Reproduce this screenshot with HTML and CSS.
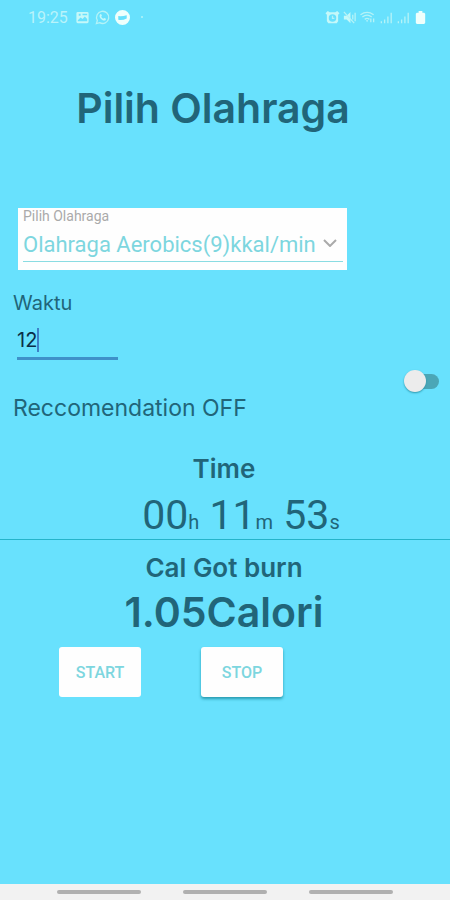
FILE: index.html
```html
<!DOCTYPE html>
<html lang="id">
<head>
<meta charset="utf-8">
<meta name="viewport" content="width=device-width, initial-scale=1">
<title>Pilih Olahraga</title>
<link rel="stylesheet" href="styles.css">
</head>
<body>
<header class="status">
  <div class="status-group">
    <span class="clock">19:25</span>
    <svg class="icon" viewBox="0 0 16 16"><path fill-rule="evenodd" d="M3 2h10q1.500 0 1.500 1.500v9q0 1.500-1.500 1.500H3q-1.500 0-1.500-1.500v-9Q1.500 2 3 2zM3 12h10V9.500L10.500 7 8 9.500 6 8l-3 3zM4 4v2h2V4zM8 4v1.500h5V4z"/></svg>
    <svg class="icon" viewBox="0 0 16 16"><path class="line" d="M1.500 14.500l1-3.500a6.500 6.500 0 1 1 2.500 2.500z"/><path d="M5.500 4.500l1-.2.900 1.900-.8.900q.8 1.500 2.300 2.200l.9-.9 1.900 1-.3 1.200q-1.200 1.200-3.200.2Q5.700 9.500 5 7.500q-.5-2 .5-3z"/></svg>
    <svg class="icon solid" viewBox="0 0 16 16"><path fill-rule="evenodd" d="M8 0a8 8 0 1 1 0 16A8 8 0 0 1 8 0zM3.500 6.500v4q4.500 1 9-1.500V5.500Q8 7 3.500 6.500z"/></svg>
    <span class="dot"></span>
  </div>
  <div class="status-group tight">
    <svg class="icon" viewBox="0 0 16 16"><path fill-rule="evenodd" d="M3 1l2 1.500h6L13 1l2.500 2.500L14 5v7l-1.500 2h-9L2 12V5L.5 3.500zM8 4.500a4 4 0 1 0 0 8 4 4 0 0 0 0-8z"/><path class="line" d="M8 6v3h2"/></svg>
    <svg class="icon" viewBox="0 0 16 16"><path d="M2 6h3l4-4v12l-4-4H2z"/><path class="line" d="M2 2l11 12M11.500 5v5M14 3v9"/></svg>
    <svg class="icon wide" viewBox="0 0 18 16"><path class="line" d="M1 5q7-5 14 0M3 7.500q5-4 10 0M5.500 10q2.500-2 5 0M12 9v4M15 9v4"/><path d="M7 11h2l-1 2z"/></svg>
    <svg class="icon" viewBox="0 0 16 16"><path class="line" d="M2.500 14v-2M6 14v-4M9.500 14V7M13 14V3"/></svg>
    <svg class="icon" viewBox="0 0 16 16"><path class="line" d="M2.500 14v-2M6 14v-4M9.500 14V7M13 14V3"/></svg>
    <svg class="icon solid" viewBox="0 0 16 16"><path d="M6 1h4v2h2l1 1v9.500L12 15H4l-1-1.500V4l1-1h2z"/></svg>
  </div>
</header>
<main>
  <h1>Pilih Olahraga</h1>
  <div class="picker">
    <label for="sport">Pilih Olahraga</label>
    <div class="picker-field">
      <select id="sport"><option>Olahraga Aerobics(9)kkal/min</option></select>
      <svg class="caret" viewBox="0 0 14 8"><path d="M1 1l6 6 6-6"/></svg>
    </div>
  </div>
  <div class="duration">
    <label for="minutes">Waktu</label>
    <div class="entry"><input id="minutes" type="text" inputmode="numeric" value="12"><span class="cursor"></span></div>
  </div>
  <input class="switch" id="recommend" type="checkbox" role="switch">
  <label class="recommend" for="recommend">Reccomendation OFF</label>
  <section class="timer">
    <h2>Time</h2>
    <p class="digits">00<small>h</small> 11<small>m</small> 53<small>s</small></p>
  </section>
  <section class="burn">
    <h2>Cal Got burn</h2>
    <p class="calories">1.05Calori</p>
  </section>
  <div class="actions">
    <button type="button">START</button>
    <button type="button" class="raised">STOP</button>
  </div>
</main>
<nav><span></span><span></span><span></span></nav>
</body>
</html>
```
FILE: styles.css
```css
* { box-sizing: border-box; }
body {
  margin: 0;
  min-height: 100vh;
  display: flex;
  flex-direction: column;
  background: #68e1fd;
  color: #216579;
  font-family: Inter, "Liberation Sans", sans-serif;
}
h1, h2, p { margin: 0; font-weight: 600; }
.status {
  display: flex;
  justify-content: space-between;
  align-items: center;
  height: 34px;
  padding: 0 22px 0 28px;
}
.status-group { display: flex; align-items: center; gap: 5px; }
.tight { gap: 2px; }
.clock { color: #b9f3fa; font: 16px Roboto, sans-serif; margin-right: 2px; }
.icon { width: 15px; height: 15px; fill: #c5f8f9; }
.wide { width: 18px; }
.solid { fill: #effffc; }
.line { fill: none; stroke: #b5f3f7; stroke-width: 1.4; }
.dot { width: 2px; height: 2px; margin-left: 6px; background: #b5f3f7; border-radius: 50%; }
main { flex: 1; }
h1 {
  margin-top: 48px;
  padding-right: 24px;
  font-size: 41px;
  line-height: 52px;
  text-align: center;
}
.picker {
  width: 73%;
  height: 62px;
  margin: 74px 0 0 18px;
  padding: 0 4px 0 5px;
  background: #fefefe;
  font-family: Roboto, sans-serif;
}
.picker label { display: block; font-size: 14px; line-height: 16px; color: #aaa; }
.picker-field {
  display: flex;
  align-items: center;
  justify-content: space-between;
  height: 38px;
  padding-right: 6px;
  border-bottom: 1px solid #8adce2;
}
select {
  appearance: none;
  min-width: 0;
  height: 38px;
  padding: 4px 0 0;
  border: 0;
  background: none;
  color: #7dd6df;
  font: 22px Roboto, sans-serif;
}
.caret { width: 14px; height: 8px; flex: none; fill: none; stroke: #aaa; stroke-width: 2; }
.duration { margin: 20px 0 0 13px; }
.duration label, .recommend { display: block; font-size: 23px; line-height: 26px; }
.duration label { font-size: 20px; }
.entry {
  display: flex;
  align-items: center;
  width: 101px;
  height: 34px;
  margin: 10px 0 0 4px;
  padding-bottom: 3px;
  border-bottom: 3px solid #3e91c9;
}
.entry input {
  field-sizing: content;
  padding: 0;
  border: 0;
  outline: 0;
  background: none;
  color: #0b2e48;
  font: 20px Inter, sans-serif;
}
.cursor { width: 2px; height: 24px; background: #3d82c8; }
.switch {
  appearance: none;
  display: flex;
  align-items: center;
  width: 35px;
  height: 22px;
  margin: 10px 11px 0 auto;
}
.switch::before {
  content: "";
  width: 22px;
  height: 22px;
  border-radius: 50%;
  background: #ececec;
  box-shadow: 0 1px 2px #2c97ad;
  z-index: 1;
}
.switch::after {
  content: "";
  flex: none;
  width: 26px;
  height: 15px;
  margin-left: -13px;
  border-radius: 8px;
  background: #4ba6b6;
}
.recommend { margin: 3px 0 0 13px; }
h2 { font-size: 26px; line-height: 32px; }
.timer {
  margin-top: 32px;
  padding-left: 32px;
  text-align: center;
  border-bottom: 1px solid #24b4ca;
}
.timer h2 { padding-right: 34px; }
.digits { margin-top: 6px; font: 41px/48px Roboto, sans-serif; }
.digits small { font-size: 20px; line-height: 20px; }
.burn { padding: 12px 2px 0 0; text-align: center; }
.calories { font-size: 41px; line-height: 56px; }
.actions { display: flex; gap: 60px; margin: 7px 0 0 59px; }
button {
  width: 82px;
  height: 50px;
  padding: 0;
  border: 0;
  border-radius: 3px;
  background: #fefefe;
  color: #7dd6df;
  font: 500 16px Roboto, sans-serif;
}
.raised { box-shadow: 0 2px 3px #299bb0; }
nav {
  display: flex;
  justify-content: center;
  gap: 42px;
  height: 16px;
  padding-top: 6px;
  background: #f2f2f2;
}
nav span { width: 84px; height: 4px; border-radius: 2px; background: #b0b0b0; }
```
